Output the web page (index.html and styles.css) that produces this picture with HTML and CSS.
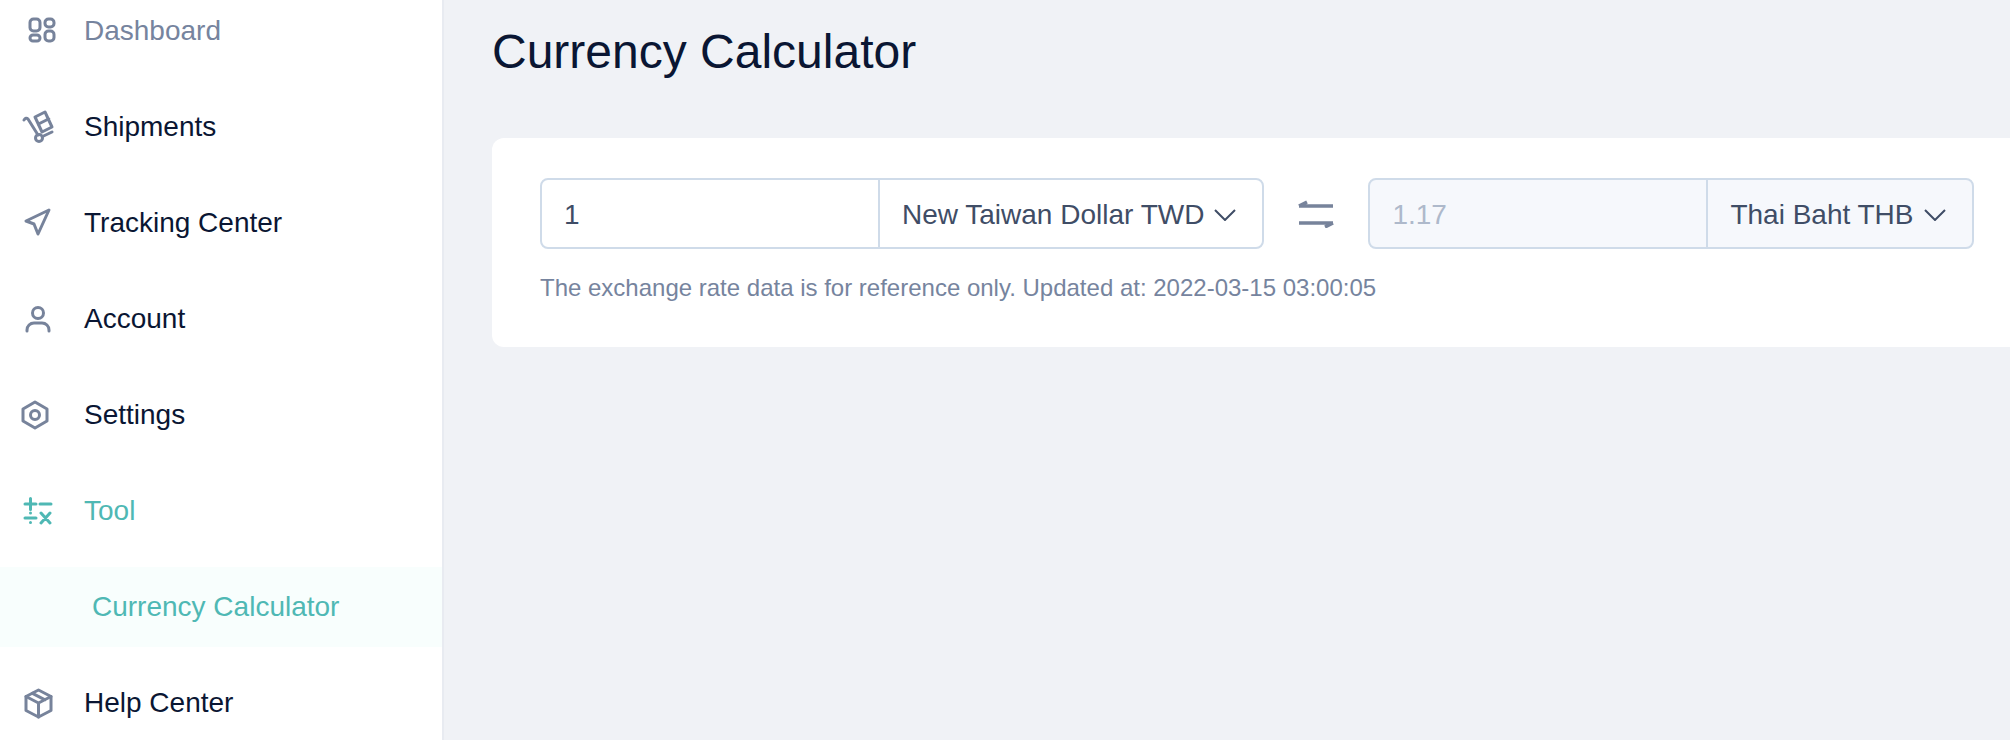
FILE: index.html
```html
<!DOCTYPE html>
<html lang="en">
<head>
    <meta charset="UTF-8">
    <meta name="viewport" content="width=device-width, initial-scale=1.0">
    <title>Currency Calculator</title>
    <link rel="stylesheet" href="styles.css">
</head>
<body>
    <aside class="sidebar">
        <nav class="menu">
            <a class="menu-item muted">
                <svg class="menu-icon" viewBox="0 0 36 36">
                    <rect x="10" y="6" width="10" height="12" rx="3.5"></rect>
                    <rect x="25" y="6" width="9" height="8" rx="3.5"></rect>
                    <rect x="10" y="22" width="10" height="6" rx="3"></rect>
                    <rect x="25" y="18" width="9" height="10" rx="3.5"></rect>
                </svg>
                Dashboard
            </a>
            <a class="menu-item">
                <svg class="menu-icon" viewBox="0 0 36 36">
                    <path d="M4 11q2-3 4-1l10 16"></path>
                    <circle cx="19" cy="29" r="3.5"></circle>
                    <path d="M22.5 27.500l9.500-4.500"></path>
                    <path d="M15 8l10-5 7 15-10 5z"></path>
                    <path d="M18.500 15l10-5"></path>
                </svg>
                Shipments
            </a>
            <a class="menu-item">
                <svg class="menu-icon" viewBox="0 0 36 36">
                    <path d="M29 5L6 16l8 3 4 10z"></path>
                </svg>
                Tracking Center
            </a>
            <a class="menu-item">
                <svg class="menu-icon" viewBox="0 0 36 36">
                    <circle cx="18" cy="12" r="5.5"></circle>
                    <path d="M7 30v-1a7 7 0 0 1 7-7h8a7 7 0 0 1 7 7v1"></path>
                </svg>
                Account
            </a>
            <a class="menu-item">
                <svg class="menu-icon" viewBox="0 0 36 36">
                    <path d="M15 5l12 7v12l-12 7-12-7V12z"></path>
                    <circle cx="15" cy="18" r="4.5"></circle>
                </svg>
                Settings
            </a>
            <a class="menu-item active">
                <svg class="menu-icon" viewBox="0 0 36 36">
                    <path d="M5 11h11M10.500 5.500v11M20 11h11M5 25h11M21 20l9 10M30 20l-9 10"></path>
                    <path d="M10.500 20v.1M10.500 29.500v.1"></path>
                </svg>
                Tool
            </a>
            <a class="submenu-item">Currency Calculator</a>
            <a class="menu-item">
                <svg class="menu-icon" viewBox="0 0 36 36">
                    <path d="M18.500 5L31 11.500v14L18.500 32 6 25.500v-14z"></path>
                    <path d="M6 11.500L18.500 18 31 11.500M18.500 18v14M12.500 8.300L25 14.800"></path>
                </svg>
                Help Center
            </a>
        </nav>
    </aside>

    <main class="main">
        <h1 class="page-title">Currency Calculator</h1>
        <section class="card">
            <div class="converter">
                <div class="field from">
                    <input class="amount" type="text" value="1">
                    <div class="currency">
                        New Taiwan Dollar TWD
                        <svg class="chevron" viewBox="0 0 22 12"><path d="M1 1l10 10L21 1"></path></svg>
                    </div>
                </div>
                <div class="swap">
                    <svg viewBox="0 0 36 28"><path d="M1 6h34M1 6l8-4M35 23H1M35 23l-8 4"></path></svg>
                </div>
                <div class="field to">
                    <input class="amount" type="text" value="1.17" disabled>
                    <div class="currency">
                        Thai Baht THB
                        <svg class="chevron" viewBox="0 0 22 12"><path d="M1 1l10 10L21 1"></path></svg>
                    </div>
                </div>
            </div>
            <p class="note">The exchange rate data is for reference only. Updated at: 2022-03-15 03:00:05</p>
        </section>
    </main>
</body>
</html>
```

FILE: styles.css
```css
* {
    margin: 0;
    padding: 0;
    box-sizing: border-box;
    font-family: "Liberation Sans", Arial, sans-serif;
}

body {
    display: flex;
    height: 740px;
    overflow: hidden;
    background-color: #f0f2f6;
    color: #0a1633;
}

.sidebar {
    width: 444px;
    flex-shrink: 0;
    background-color: white;
    border-right: 2px solid #e8ebf1;
    overflow: hidden;
}

.menu {
    margin-top: -17px;
}

.menu-item {
    display: flex;
    align-items: center;
    gap: 28px;
    height: 96px;
    padding-left: 20px;
    font-size: 28px;
}

.menu-icon {
    width: 36px;
    height: 36px;
    flex-shrink: 0;
    fill: none;
    stroke: #77839b;
    stroke-width: 3;
    stroke-linecap: round;
    stroke-linejoin: round;
}

.muted {
    color: #76849e;
}

.active {
    color: #4fb8b4;
}

.active .menu-icon {
    stroke: #4fb8b4;
}

.submenu-item {
    display: flex;
    align-items: center;
    height: 80px;
    margin: 8px 0;
    padding-left: 92px;
    font-size: 28px;
    color: #4fb8b4;
    background-color: #f8fefd;
}

.main {
    flex: 1;
    min-width: 0;
    padding: 24px 0 0 48px;
    overflow: hidden;
}

.page-title {
    height: 56px;
    margin-bottom: 58px;
    font-size: 48px;
    font-weight: 400;
    line-height: 56px;
}

.card {
    height: 209px;
    margin-right: -20px;
    padding: 40px 48px;
    background-color: white;
    border-radius: 12px;
}

.converter {
    display: flex;
    align-items: center;
}

.field {
    display: flex;
    height: 71px;
    border: 2px solid #cfdbe9;
    border-radius: 8px;
    overflow: hidden;
}

.amount {
    width: 338px;
    padding: 2px 22px 0;
    border: none;
    outline: none;
    border-right: 2px solid #cfdbe9;
    background: none;
    font-size: 28px;
    color: #3f4d66;
}

.amount:disabled {
    color: #aeb9cb;
}

.to {
    background-color: #f6f8fc;
}

.currency {
    display: flex;
    align-items: center;
    gap: 10px;
    padding: 2px 26px 0 22px;
    font-size: 28px;
    color: #3f4d66;
    white-space: nowrap;
}

.chevron {
    width: 22px;
    height: 12px;
    fill: none;
    stroke: #3f4d66;
    stroke-width: 2;
}

.swap {
    display: flex;
    justify-content: center;
    width: 104px;
}

.swap svg {
    width: 36px;
    height: 28px;
    fill: none;
    stroke: #77839b;
    stroke-width: 3.500;
}

.note {
    margin-top: 25px;
    font-size: 24px;
    line-height: 28px;
    color: #76849e;
}
```
